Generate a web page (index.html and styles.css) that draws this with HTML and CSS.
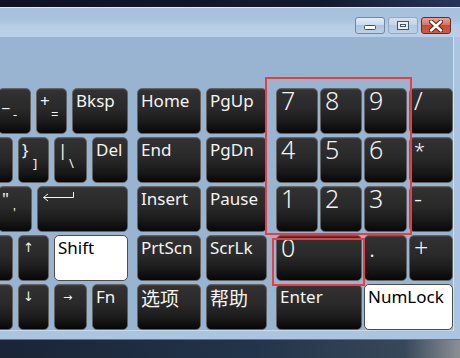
FILE: index.html
```html
<!DOCTYPE html>
<html lang="zh">
<head>
    <meta charset="UTF-8">
    <meta name="viewport" content="width=device-width, initial-scale=1.0">
    <title>屏幕键盘</title>
    <link rel="stylesheet" href="styles.css">
</head>
<body>
    <div class="desktop-top"></div>

    <div class="window">
        <!-- Barre de titre avec les boutons -->
        <div class="titlebar">
            <div class="cap-btn min">
                <svg width="12" height="5" viewBox="0 0 12 5"><rect x="0.5" y="0.5" width="11" height="4" rx="1" fill="#fff" stroke="#3f4f63"/></svg>
            </div>
            <div class="cap-btn max">
                <svg width="12" height="9" viewBox="0 0 12 9"><rect x="0.5" y="0.5" width="11" height="8" fill="#e9eef4" stroke="#46576b"/><rect x="3.5" y="3.5" width="5" height="2" fill="#fff" stroke="#46576b"/></svg>
            </div>
            <div class="cap-btn close">
                <svg width="14" height="12" viewBox="0 0 14 12">
                    <path d="M2 1.5 L12 10.5 M12 1.5 L2 10.5" stroke="#5b1e16" stroke-width="4.5" stroke-linecap="round"/>
                    <path d="M2 1.5 L12 10.5 M12 1.5 L2 10.5" stroke="#fff" stroke-width="2.5" stroke-linecap="round"/>
                </svg>
            </div>
        </div>

        <div class="client">
            <div class="keyboard">
                <!-- Bloc principal (coupé à gauche) -->
                <div class="block main">
                    <div class="row">
                        <div class="key dual narrow"><span class="top">_</span><span class="sub">-</span></div>
                        <div class="key dual small"><span class="top">+</span><span class="sub">=</span></div>
                        <div class="key bksp">Bksp</div>
                    </div>
                    <div class="row">
                        <div class="key small"></div>
                        <div class="key dual small"><span class="top">}</span><span class="sub">]</span></div>
                        <div class="key dual narrow"><span class="top">|</span><span class="sub">\</span></div>
                        <div class="key del">Del</div>
                    </div>
                    <div class="row">
                        <div class="key dual quote"><span class="top">"</span><span class="sub">'</span></div>
                        <div class="key enter">
                            <svg class="enter-arrow" width="33" height="11" viewBox="0 0 33 11"><path d="M31.5 0 V5.5 H1.5 M6 2 L1.5 5.5 L6 9" fill="none" stroke="#f4f4f4" stroke-width="1"/></svg>
                        </div>
                    </div>
                    <div class="row">
                        <div class="key small"></div>
                        <div class="key small"><span class="arrow">↑</span></div>
                        <div class="key light shift">Shift</div>
                    </div>
                    <div class="row">
                        <div class="key small"></div>
                        <div class="key small"><span class="arrow">↓</span></div>
                        <div class="key narrow"><span class="arrow right">→</span></div>
                        <div class="key del">Fn</div>
                    </div>
                </div>

                <!-- Bloc navigation -->
                <div class="block nav">
                    <div class="key">Home</div>
                    <div class="key">PgUp</div>
                    <div class="key">End</div>
                    <div class="key">PgDn</div>
                    <div class="key">Insert</div>
                    <div class="key">Pause</div>
                    <div class="key">PrtScn</div>
                    <div class="key">ScrLk</div>
                    <div class="key cjk">选项</div>
                    <div class="key cjk">帮助</div>
                </div>

                <!-- Pavé numérique -->
                <div class="block num">
                    <div class="key">7</div>
                    <div class="key">8</div>
                    <div class="key">9</div>
                    <div class="key">/</div>
                    <div class="key">4</div>
                    <div class="key">5</div>
                    <div class="key">6</div>
                    <div class="key star">*</div>
                    <div class="key">1</div>
                    <div class="key">2</div>
                    <div class="key">3</div>
                    <div class="key">-</div>
                    <div class="key span2">0</div>
                    <div class="key">.</div>
                    <div class="key">+</div>
                    <div class="key span2 label">Enter</div>
                    <div class="key span2 label light">NumLock</div>
                </div>
            </div>

            <div class="mark mark-pad"></div>
            <div class="mark mark-zero"></div>
        </div>
    </div>

    <div class="desktop-bottom"></div>
</body>
</html>
```

FILE: styles.css
```css
* {
    margin: 0;
    padding: 0;
    box-sizing: border-box;
}

body {
    width: 460px;
    height: 358px;
    overflow: hidden;
    background-color: #1c2538;
    font-family: "Noto Sans", "Noto Sans CJK SC", sans-serif;
}

/* Bureau derrière la fenêtre */
.desktop-top {
    height: 7px;
    background: linear-gradient(90deg, #0f1120 0%, #141a2d 70%, #26335a 100%);
}

.desktop-bottom {
    height: 18px;
    background: linear-gradient(90deg, #1a2436 0%, #22344b 55%, #374859 88%, #8c9095 100%);
}

/* Fenêtre */
.window {
    border-top: 1px solid #dce8f5;
    background-color: #abc5e0;
    padding-bottom: 8px;
    border-bottom: 1px solid #5d7893;
}

.titlebar {
    height: 29px;
    display: flex;
    justify-content: flex-end;
    align-items: flex-start;
    gap: 3px;
    padding: 9px 9px 0 0;
    background: linear-gradient(180deg, #a7c0dc 0%, #a9c2dd 40%, #b6cde6 60%, #bad0e9 100%);
}

.cap-btn {
    width: 30px;
    height: 17px;
    border: 1px solid #7088a5;
    border-radius: 3px;
    display: flex;
    align-items: center;
    justify-content: center;
    background: linear-gradient(180deg, #e2ecf7 0%, #cadbee 45%, #adc4de 50%, #bed2e8 100%);
}

.cap-btn.min {
    align-items: flex-end;
    padding-bottom: 3px;
}

.cap-btn.max {
    border-color: #92a7c0;
    background: linear-gradient(180deg, #d3e0ee 0%, #c3d5e9 45%, #b2c8e1 50%, #bcd0e7 100%);
}

.cap-btn.close {
    border-color: #6b2a22;
    background: linear-gradient(180deg, #e7a497 0%, #d67462 45%, #c44b36 50%, #cc5d45 100%);
}

/* Zone cliente */
.client {
    position: relative;
    height: 294px;
    margin-right: 7px;
    padding-top: 51px;
    overflow: hidden;
    background-color: #99b4d1;
    box-shadow: 1px 0 0 #d2e2f2;
    border-bottom: 1px solid #c4dcee;
}

.keyboard {
    display: flex;
    gap: 9px;
}

.block.main {
    width: 128px;
    display: flex;
    flex-direction: column;
    gap: 3px;
}

.row {
    height: 46px;
    display: flex;
    justify-content: flex-end;
    gap: 5px;
}

.block.nav {
    display: grid;
    grid-template-columns: 64px 61px;
    grid-auto-rows: 46px;
    column-gap: 5px;
    row-gap: 3px;
}

.block.num {
    display: grid;
    grid-template-columns: 42px 42px 43px 44px;
    grid-auto-rows: 46px;
    column-gap: 2px;
    row-gap: 3px;
}

/* Touches */
.key {
    flex-shrink: 0;
    height: 46px;
    display: flex;
    flex-direction: column;
    align-items: flex-start;
    padding: 3px 3px;
    border: 1px solid #626262;
    border-radius: 5px;
    background: linear-gradient(180deg, #323232 0%, #292929 45%, #1a1a1a 75%, #070707 100%);
    box-shadow: inset 0 1px 0 rgba(255, 255, 255, 0.07);
    color: #f4f4f4;
    font-size: 17px;
    line-height: 1;
    white-space: nowrap;
}

.key.light {
    background: #ffffff;
    border-color: #4c4c4c;
    color: #000;
}

.key.small { width: 31px; }
.key.narrow { width: 33px; }
.key.quote { width: 34px; }
.key.del { width: 36px; }
.key.bksp { width: 56px; }
.key.shift { width: 74px; }
.key.enter { width: 91px; }

.key .sub {
    font-size: 13px;
    padding-left: 11px;
    margin-top: -1px;
}

.enter-arrow {
    margin: 2px 0 0 1px;
}

.arrow {
    font-family: "DejaVu Sans", sans-serif;
    font-size: 13px;
    margin: 2px 0 0 1px;
}

.arrow.right {
    font-size: 11px;
    margin: 4px 0 0 5px;
}

.key.cjk {
    font-family: "Noto Sans CJK SC", sans-serif;
    font-size: 19px;
    padding-top: 3px;
}

.num .key {
    font-size: 25px;
    font-weight: 300;
    line-height: 22px;
    padding: 0 4px;
}

.num .key.star {
    font-size: 20px;
    padding-top: 2px;
}

.num .key.label {
    font-size: 17px;
    font-weight: 400;
    line-height: 1;
    padding: 3px 3px;
}

.num .span2 {
    grid-column: span 2;
}

/* Cadres rouges d'annotation */
.mark {
    position: absolute;
    border: 2px solid #ee3b3f;
    pointer-events: none;
}

.mark-pad {
    left: 265px;
    top: 40px;
    width: 147px;
    height: 158px;
}

.mark-zero {
    left: 272px;
    top: 201px;
    width: 93px;
    height: 48px;
}
```
